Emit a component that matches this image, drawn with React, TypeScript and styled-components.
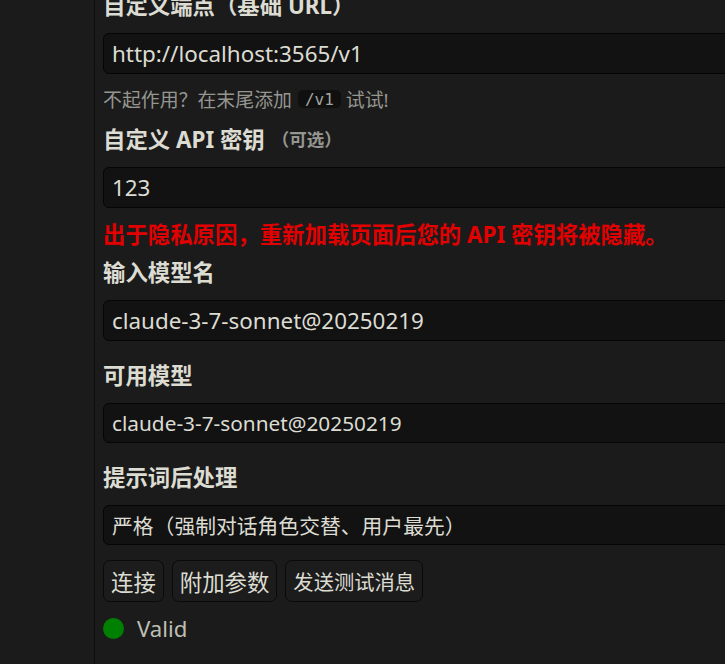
import React from 'react'
import styled, { createGlobalStyle } from 'styled-components'

const GlobalStyle = createGlobalStyle`
  html, body {
    margin: 0;
    padding: 0;
    background: #1b1b1b;
    overflow: hidden;
  }
  body {
    font-family: 'Noto Sans', 'Noto Sans CJK SC', sans-serif;
    color: rgb(220, 220, 210);
  }
`

const Page = styled.div`
  display: flex;
  height: 664px;
  width: 725px;
  overflow: hidden;
`

const Sidebar = styled.div`
  flex: 0 0 94px;
  border-right: 1px solid #0d0d0d;
  background: #1b1b1b;
`

const Main = styled.div`
  flex: 0 0 700px;
  display: flex;
  flex-direction: column;
  padding-left: 8px;
  margin-top: -9px;
`

const Label = styled.div<{ $gap?: number }>`
  height: 26px;
  display: flex;
  align-items: center;
  font-size: 22.4px;
  font-weight: 700;
  margin-top: ${({ $gap }) => ($gap === undefined ? 20 : $gap)}px;
  margin-bottom: 16px;
  white-space: nowrap;
`

const Optional = styled.span`
  font-size: 17.5px;
  color: rgb(150, 150, 145);
  margin-left: 7px;
`

const Field = styled.div<{ $select?: boolean }>`
  box-sizing: border-box;
  height: ${({ $select }) => ($select ? '40px' : '41px')};
  background: #121212;
  border: 1px solid #050505;
  border-radius: 6px;
  padding: 0 8px;
  display: flex;
  align-items: center;
  font-size: ${({ $select }) => ($select ? '20.8px' : '22.4px')};
  color: rgb(220, 220, 210);
  white-space: nowrap;
`

const Hint = styled.div`
  height: 26px;
  display: flex;
  align-items: center;
  margin-top: 12px;
  font-size: 18.9px;
  color: rgb(150, 150, 145);
  white-space: nowrap;
`

const Code = styled.code`
  box-sizing: border-box;
  height: 18px;
  display: inline-flex;
  align-items: center;
  font-family: 'DejaVu Sans Mono', monospace;
  font-size: 16px;
  background: #101010;
  border-radius: 5px;
  padding: 0 7px;
  margin: 0 5px 0 6px;
  color: rgb(165, 165, 160);
`

const Warning = styled.div`
  height: 26px;
  display: flex;
  align-items: center;
  margin-top: 12px;
  font-size: 22.4px;
  font-weight: 700;
  color: #e30000;
  white-space: nowrap;
`

const ButtonRow = styled.div`
  display: flex;
  gap: 8px;
  margin-top: 15px;
`

const Button = styled.div<{ $small?: boolean }>`
  box-sizing: border-box;
  height: 42px;
  display: flex;
  align-items: center;
  padding: 0 7px;
  background: #1c1c1c;
  border: 1px solid #0a0a0a;
  border-radius: 7px;
  font-size: ${({ $small }) => ($small ? '20.3px' : '22.4px')};
  color: rgb(220, 220, 210);
`

const Status = styled.div`
  height: 26px;
  display: flex;
  align-items: center;
  gap: 13px;
  margin-top: 13px;
  font-size: 22.2px;
  color: rgb(190, 190, 180);
`

const Dot = styled.span`
  width: 21px;
  height: 21px;
  border-radius: 50%;
  background: #008000;
`

export default function App() {
  return (
    <>
      <GlobalStyle />
      <Page>
        <Sidebar />
        <Main>
          <Label $gap={0}>自定义端点（基础 URL）</Label>
          <Field>http://localhost:3565/v1</Field>
          <Hint>
            不起作用？在末尾添加<Code>/v1</Code>试试!
          </Hint>
          <Label $gap={13}>
            自定义 API 密钥<Optional>（可选）</Optional>
          </Label>
          <Field>123</Field>
          <Warning>出于隐私原因，重新加载页面后您的 API 密钥将被隐藏。</Warning>
          <Label $gap={12}>输入模型名</Label>
          <Field>claude-3-7-sonnet@20250219</Field>
          <Label>可用模型</Label>
          <Field $select>claude-3-7-sonnet@20250219</Field>
          <Label>提示词后处理</Label>
          <Field $select>严格（强制对话角色交替、用户最先）</Field>
          <ButtonRow>
            <Button>连接</Button>
            <Button>附加参数</Button>
            <Button $small>发送测试消息</Button>
          </ButtonRow>
          <Status>
            <Dot />
            Valid
          </Status>
        </Main>
      </Page>
    </>
  )
}
